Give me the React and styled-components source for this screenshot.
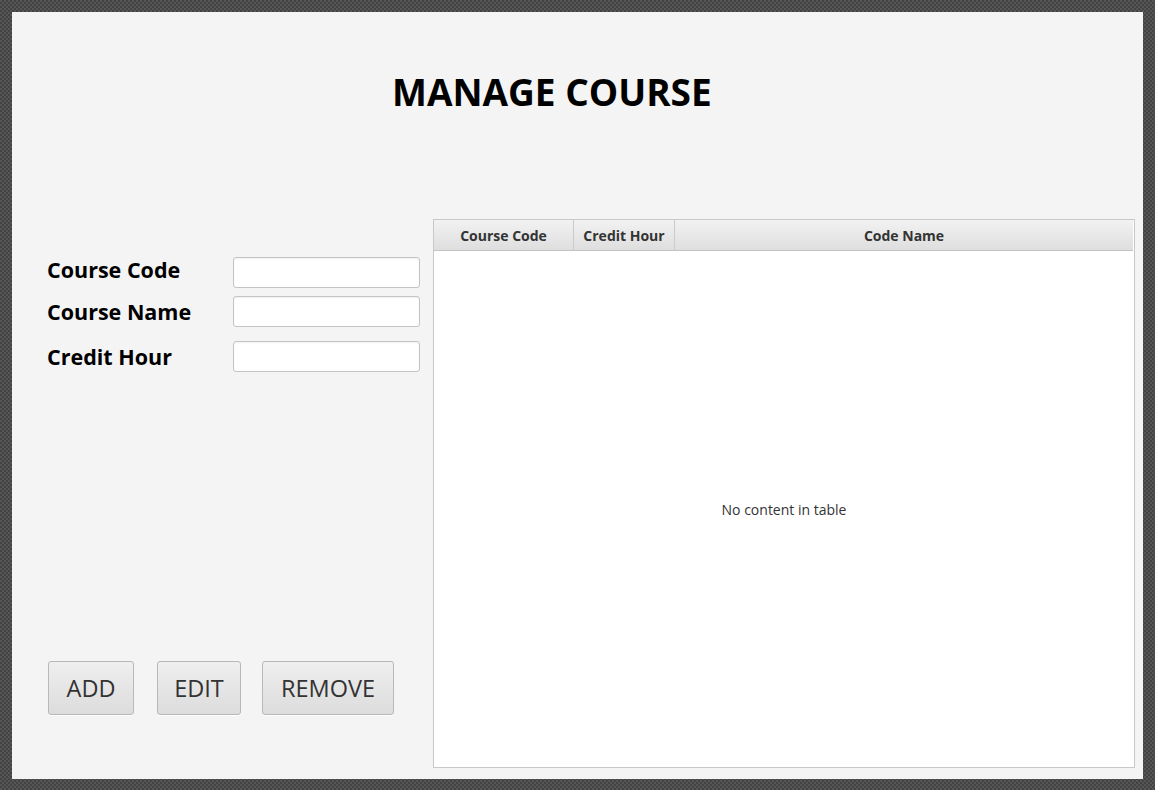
import { createGlobalStyle, styled } from "styled-components";

const GlobalStyle = createGlobalStyle`
	html, body {
		margin: 0;
		padding: 0;
	}
	body {
		width: 1155px;
		height: 790px;
		overflow: hidden;
		background-color: #4b4b4b;
		background-image: repeating-conic-gradient(#434343 0 25%, #565656 0 50%);
		background-size: 4px 4px;
		font-family: "Open Sans", "Noto Sans", sans-serif;
	}
`;

// label offset keeps the first label sitting a little high, as in the original form
const fields = [
	{ label: "Course Code", gap: 0, shift: -7 },
	{ label: "Course Name", gap: 8, shift: 0 },
	{ label: "Credit Hour", gap: 14, shift: 0 },
];
const columns = [
	{ label: "Course Code", width: 140 },
	{ label: "Credit Hour", width: 101 },
	{ label: "Code Name", width: 0 },
];
const buttons = [
	{ label: "ADD", width: 86, gap: 0 },
	{ label: "EDIT", width: 84, gap: 23 },
	{ label: "REMOVE", width: 132, gap: 21 },
];

export default function App() {
	return (
		<>
			<GlobalStyle />
			<Frame>
				<Panel>
					<TitleRow>
						<Title>MANAGE COURSE</Title>
					</TitleRow>
					<LeftColumn>
						<Form>
							{fields.map((f) => (
								<FieldRow key={f.label} $gap={f.gap}>
									<Label $shift={f.shift}>{f.label}</Label>
									<TextField type="text" />
								</FieldRow>
							))}
						</Form>
						<ButtonBar>
							{buttons.map((b) => (
								<ActionButton key={b.label} $width={b.width} $gap={b.gap}>
									{b.label}
								</ActionButton>
							))}
						</ButtonBar>
					</LeftColumn>
					<Table>
						<HeaderRow>
							{columns.map((c) => (
								<HeaderCell key={c.label} $width={c.width}>
									{c.label}
								</HeaderCell>
							))}
						</HeaderRow>
						<TableBody>No content in table</TableBody>
					</Table>
				</Panel>
			</Frame>
		</>
	);
}

const Frame = styled.div`
	padding: 12px;
`;

const Panel = styled.div`
	width: 1131px;
	height: 767px;
	box-sizing: border-box;
	background: #f4f4f4;
	display: grid;
	grid-template-columns: 421px 702px;
	grid-template-rows: 207px 549px;
`;

const TitleRow = styled.div`
	grid-column: 1 / span 2;
	padding: 56px 0 0 380px;
`;

const Title = styled.h1`
	margin: 0;
	font-size: 37px;
	font-weight: 700;
	color: #000;
	line-height: 48px;
`;

const LeftColumn = styled.div`
	display: flex;
	flex-direction: column;
	padding: 38px 13px 53px 35px;
`;

const Form = styled.div`
	display: flex;
	flex-direction: column;
`;

const FieldRow = styled.div`
	display: flex;
	align-items: center;
	justify-content: space-between;
	margin-top: ${(p) => p.$gap}px;
`;

const Label = styled.span`
	font-size: 21.5px;
	font-weight: 700;
	color: #000;
	margin-top: ${(p) => p.$shift}px;
`;

const TextField = styled.input`
	width: 187px;
	height: 31px;
	box-sizing: border-box;
	border: 1px solid #c4c4c4;
	border-radius: 3px;
	background: #fff;
	box-shadow: inset 0 1px 2px rgba(0, 0, 0, 0.06);
	outline: none;
`;

const ButtonBar = styled.div`
	margin-top: auto;
	display: flex;
	padding-left: 1px;
`;

const ActionButton = styled.button`
	width: ${(p) => p.$width}px;
	height: 54px;
	margin-left: ${(p) => p.$gap}px;
	padding: 0;
	border: 1px solid #b8b8b8;
	border-radius: 3px;
	background: linear-gradient(#efefef, #dcdcdc);
	font-family: "Open Sans", sans-serif;
	font-size: 23.5px;
	color: #333;
	box-shadow: 0 1px 0 #fff;
`;

const Table = styled.div`
	border: 1px solid #c8c8c8;
	background: #fff;
	display: flex;
	flex-direction: column;
`;

const HeaderRow = styled.div`
	display: flex;
	height: 30px;
	margin-right: 1px;
	border-bottom: 1px solid #c4c4c4;
	background: linear-gradient(#f2f2f2, #dedede);
`;

const HeaderCell = styled.div`
	${(p) => (p.$width ? `width: ${p.$width}px;` : "flex: 1;")}
	box-sizing: border-box;
	border-right: 1px solid #cbcbcb;
	display: flex;
	align-items: center;
	justify-content: center;
	font-size: 14px;
	font-weight: 700;
	color: #333;
	&:last-child {
		border-right: none;
	}
`;

const TableBody = styled.div`
	flex: 1;
	display: flex;
	align-items: center;
	justify-content: center;
	font-size: 14px;
	color: #333;
`;
